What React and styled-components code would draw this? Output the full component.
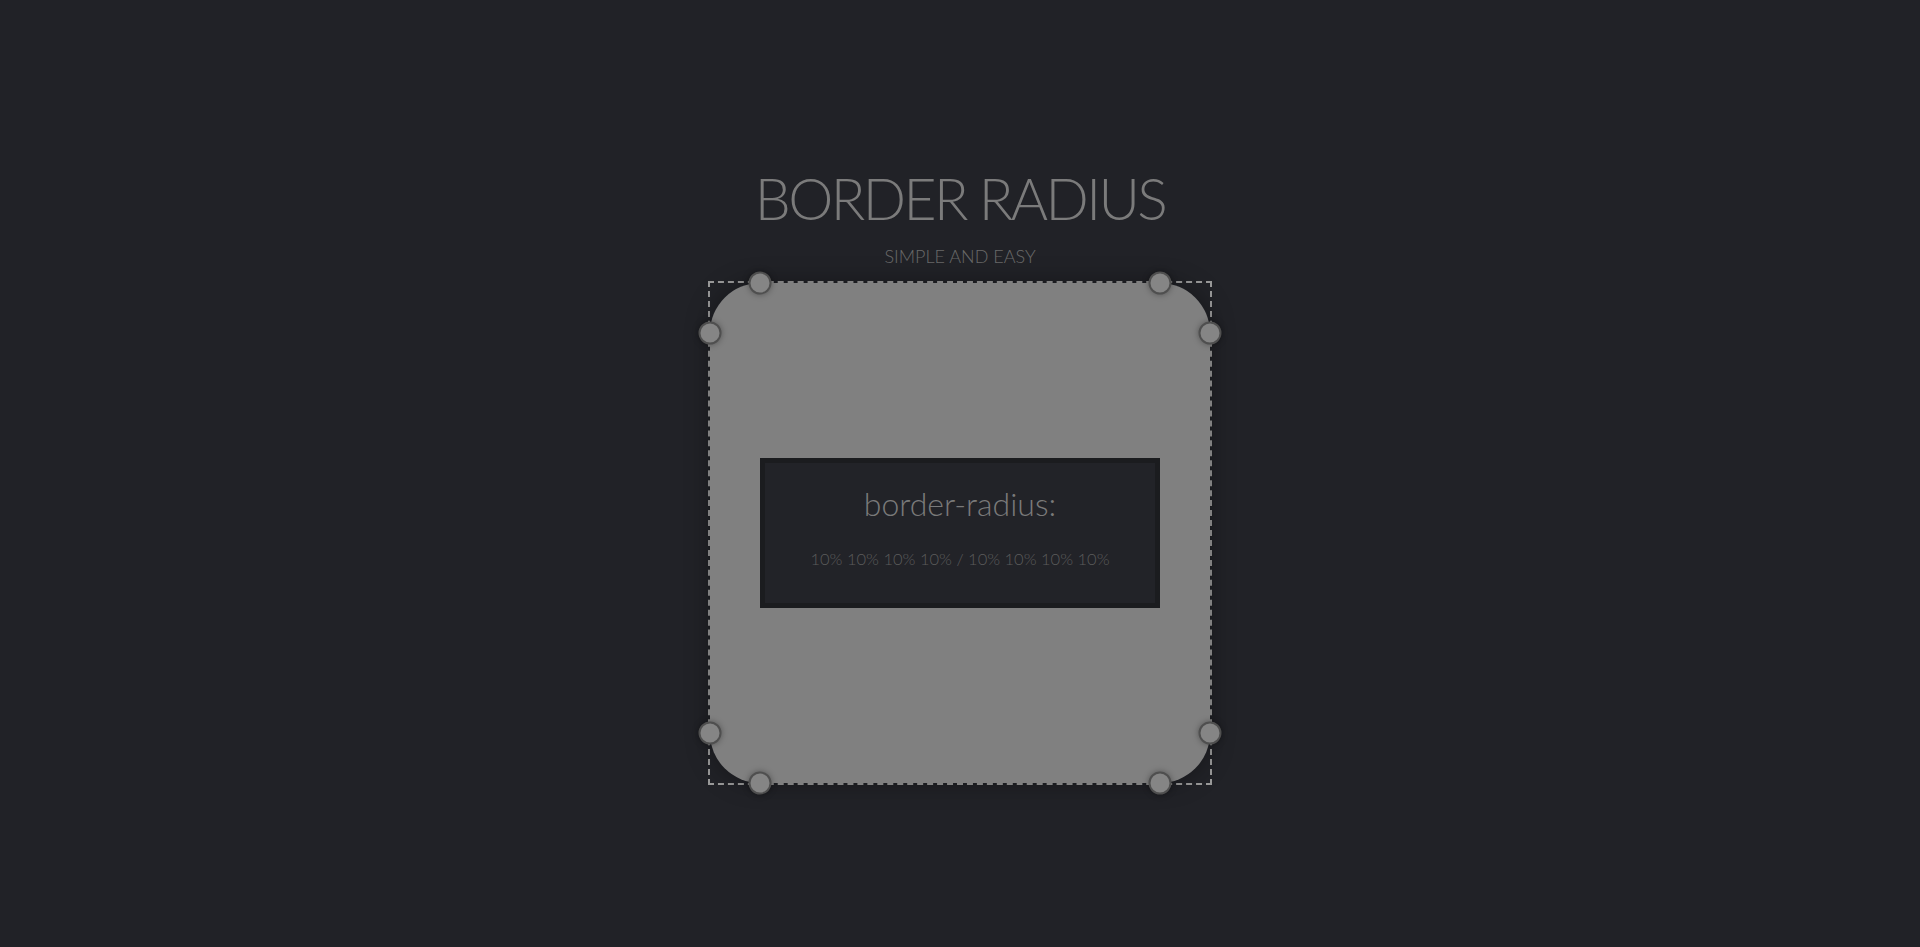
import React from 'react'
import styled, { createGlobalStyle } from 'styled-components'

const Global = createGlobalStyle`
  html, body {
    margin: 0;
    padding: 0;
    background: #212227;
  }
  body {
    font-family: Lato, "Open Sans", sans-serif;
  }
`

const Page = styled.main`
  min-height: 100vh;
  display: flex;
  flex-direction: column;
  align-items: center;
  padding-top: 166px;
  box-sizing: border-box;
`

const Title = styled.h1`
  margin: 0;
  font-size: 57px;
  line-height: 64px;
  font-weight: 300;
  letter-spacing: -2.6px;
  color: #7b7b7b;
`

const Subtitle = styled.p`
  margin: 16px 0 15px;
  font-size: 18px;
  line-height: 20px;
  font-weight: 300;
  color: #6a6a6a;
`

const Frame = styled.div`
  position: relative;
  width: 500px;
  height: 500px;
  border: 2px dashed #9a9a9a;
`

const Shape = styled.div`
  width: 100%;
  height: 100%;
  background: #808080;
  border-radius: 10%;
  box-shadow: 0 0 24px rgba(0, 0, 0, 0.35);
  display: flex;
  align-items: center;
  justify-content: center;
`

const Handle = styled.span`
  position: absolute;
  width: 19px;
  height: 19px;
  border-radius: 50%;
  background: #858585;
  border: 2px solid #4f4f4f;
  box-shadow: 0 0 6px rgba(0, 0, 0, 0.35);
  transform: translate(-50%, -50%);
  left: ${p => p.$x};
  top: ${p => p.$y};
`

const Panel = styled.div`
  width: 400px;
  height: 150px;
  box-sizing: border-box;
  background: #222328;
  border: 5px solid #1b1c1f;
  padding-bottom: 14px;
  display: flex;
  flex-direction: column;
  align-items: center;
  justify-content: center;
  gap: 25px;
`

const Prop = styled.div`
  font-size: 32px;
  line-height: 40px;
  font-weight: 300;
  color: #7a7a7a;
`

const Value = styled.div`
  font-size: 16.5px;
  line-height: 20px;
  font-weight: 300;
  color: #5b5b5b;
`

const handles = [
  ['10%', '0%'],
  ['90%', '0%'],
  ['100%', '10%'],
  ['100%', '90%'],
  ['90%', '100%'],
  ['10%', '100%'],
  ['0%', '90%'],
  ['0%', '10%'],
]

export default function App() {
  return (
    <Page>
      <Global />
      <Title>BORDER RADIUS</Title>
      <Subtitle>SIMPLE AND EASY</Subtitle>
      <Frame>
        <Shape>
          <Panel>
            <Prop>border-radius:</Prop>
            <Value>10% 10% 10% 10% / 10% 10% 10% 10%</Value>
          </Panel>
        </Shape>
        {handles.map(([x, y]) => (
          <Handle key={x + y} $x={x} $y={y} />
        ))}
      </Frame>
    </Page>
  )
}
